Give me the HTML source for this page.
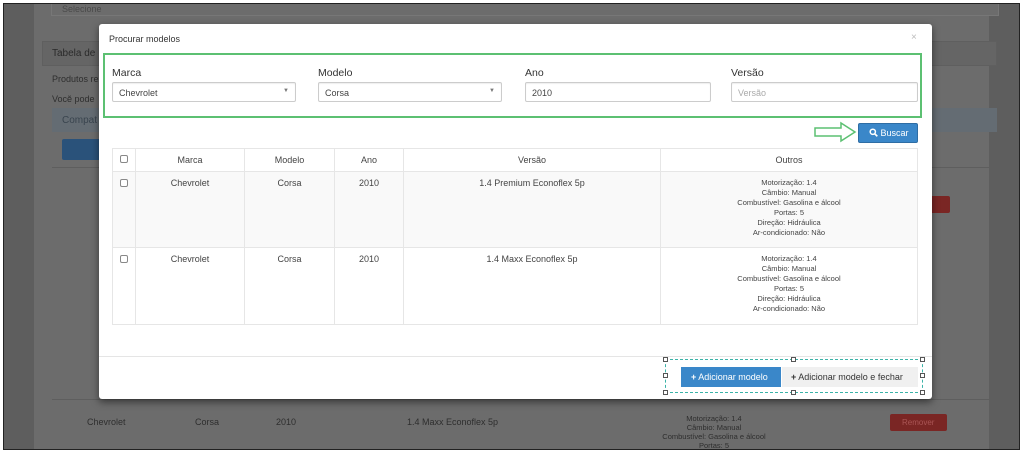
<!DOCTYPE html>
<html><head><meta charset="utf-8"><style>
*{box-sizing:border-box;margin:0;padding:0}
body{width:1024px;height:454px;overflow:hidden;background:#fff;font-family:"Liberation Sans",sans-serif;position:relative}
.a{position:absolute}
.frame{left:3px;top:3px;width:1017px;height:447px;background:#5e5e5e;border:1.5px solid #222;overflow:hidden}
.t{color:#2e2e2e;font-size:9px}
.lbl{font-size:10.5px;color:#333}
.inp{background:#fff;border:1px solid #ccc;border-radius:2px;height:20px;font-size:9px;color:#444;padding:5px 6px;box-shadow:inset 0 1px 1px rgba(0,0,0,.07)}
table{border-collapse:collapse;font-size:9px;color:#444}
td,th{border:1px solid #e6e6e6;text-align:center;vertical-align:top;font-weight:normal}
th{height:23px;vertical-align:middle}
.cb{display:inline-block;width:8px;height:8px;border:1px solid #888;border-radius:2px;background:#fff}
.o{font-size:7.5px;line-height:10px;padding-top:6px}
.h{position:absolute;width:5px;height:5px;border:1px solid #555;background:#fff}
</style></head><body>
<div class="a frame">
 <div class="a" style="left:30px;top:0;width:955px;height:450px;background:#6c6c6c"></div>
 <div class="a" style="left:47px;top:-6px;width:948px;height:18px;border:1px solid #777;background:#6c6c6c"></div>
 <div class="a t" style="left:58px;top:0;font-size:9px;color:#4a4a4a">Selecione</div>
 <div class="a" style="left:38px;top:37px;width:955px;height:25px;background:#656565;border:1px solid #5f5f5f"></div>
 <div class="a t" style="left:48px;top:44px;font-size:10px;color:#2a2a2a">Tabela de</div>
 <div class="a t" style="left:48px;top:70px">Produtos rel</div>
 <div class="a t" style="left:48px;top:90px">Vocĕ pode</div>
 <div class="a" style="left:48px;top:104px;width:945px;height:24px;background:#646c73"></div>
 <div class="a t" style="left:58px;top:111px;font-size:10px;color:#39444e">Compat</div>
 <div class="a" style="left:58px;top:135px;width:45px;height:21px;background:#2a527a;border-radius:2px"></div>
 <div class="a" style="left:48px;top:163px;width:945px;height:1px;background:#5e5e5e"></div>
 <div class="a" style="left:886px;top:192px;width:60px;height:17px;background:#7a2624;border-radius:2px"></div>
 <div class="a" style="left:48px;top:395px;width:945px;height:1px;background:#5e5e5e"></div>
 <div class="a t" style="left:83px;top:413px">Chevrolet</div>
 <div class="a t" style="left:191px;top:413px">Corsa</div>
 <div class="a t" style="left:272px;top:413px">2010</div>
 <div class="a t" style="left:403px;top:413px">1.4 Maxx Econoflex 5p</div>
 <div class="a t" style="left:655px;top:410px;font-size:7.5px;line-height:9px;text-align:center;width:110px">Motorização: 1.4<br>Câmbio: Manual<br>Combustível: Gasolina e álcool<br>Portas: 5</div>
 <div class="a" style="left:886px;top:410px;width:57px;height:17px;background:#7a2624;border-radius:2px;font-size:8px;color:#a55;padding:4px 0 0 12px;white-space:nowrap">Remover</div>
</div>
<!-- modal -->
<div class="a" style="left:99px;top:24px;width:833px;height:375px;background:#fff;border-radius:3px;box-shadow:0 3px 8px rgba(0,0,0,.5)">
 <div class="a" style="left:10px;top:10px;font-size:9px;color:#333">Procurar modelos</div>
 <div class="a" style="left:812px;top:8px;font-size:10px;color:#bbb">×</div>
 <div class="a" style="left:4px;top:29px;width:819px;height:65px;border:2px solid #5cc072"></div>
 <div class="a lbl" style="left:13px;top:43px">Marca</div>
 <div class="a lbl" style="left:219px;top:43px">Modelo</div>
 <div class="a lbl" style="left:426px;top:43px">Ano</div>
 <div class="a lbl" style="left:632px;top:43px">Versão</div>
 <div class="a inp" style="left:13px;top:58px;width:184px">Chevrolet<span style="float:right;font-size:6px;color:#777">▼</span></div>
 <div class="a inp" style="left:219px;top:58px;width:184px">Corsa<span style="float:right;font-size:6px;color:#777">▼</span></div>
 <div class="a inp" style="left:426px;top:58px;width:186px">2010</div>
 <div class="a inp" style="left:632px;top:58px;width:187px;color:#aaa">Versão</div>
 <svg class="a" style="left:714px;top:97px" width="46" height="22"><path d="M2 7H28V2L42 11L28 20V15H2Z" fill="#fff" stroke="#5cc072" stroke-width="1.5"/></svg>
 <div class="a" style="left:759px;top:99px;width:60px;height:20px;background:#3a87c9;border:1px solid #2e6da4;border-radius:2px;color:#fff;font-size:9px;padding:4px 0 0 10px"><svg width="9" height="9" style="vertical-align:-1px"><circle cx="3.8" cy="3.8" r="2.6" fill="none" stroke="#fff" stroke-width="1.5"/><path d="M5.8 5.8L8.3 8.3" stroke="#fff" stroke-width="1.7"/></svg> Buscar</div>
 <table class="a" style="left:13px;top:124px;width:806px">
  <tr><th style="width:23px"><span class="cb"></span></th><th style="width:109px">Marca</th><th style="width:90px">Modelo</th><th style="width:69px">Ano</th><th style="width:257px">Versão</th><th>Outros</th></tr>
  <tr style="background:#f9f9f9;height:76px"><td style="padding-top:7px"><span class="cb"></span></td><td style="padding-top:6px">Chevrolet</td><td style="padding-top:6px">Corsa</td><td style="padding-top:6px">2010</td><td style="padding-top:6px">1.4 Premium Econoflex 5p</td><td class="o">Motorização: 1.4<br>Câmbio: Manual<br>Combustível: Gasolina e álcool<br>Portas: 5<br>Direção: Hidráulica<br>Ar-condicionado: Não</td></tr>
  <tr style="height:77px"><td style="padding-top:7px"><span class="cb"></span></td><td style="padding-top:6px">Chevrolet</td><td style="padding-top:6px">Corsa</td><td style="padding-top:6px">2010</td><td style="padding-top:6px">1.4 Maxx Econoflex 5p</td><td class="o">Motorização: 1.4<br>Câmbio: Manual<br>Combustível: Gasolina e álcool<br>Portas: 5<br>Direção: Hidráulica<br>Ar-condicionado: Não</td></tr>
 </table>
 <div class="a" style="left:0;top:332px;width:833px;height:1px;background:#e5e5e5"></div>
 <div class="a" style="left:566px;top:335px;width:258px;height:34px;border:1.5px dashed #3bb3a8"></div>
 <div class="h" style="left:564px;top:333px"></div><div class="h" style="left:692px;top:333px"></div><div class="h" style="left:821px;top:333px"></div>
 <div class="h" style="left:564px;top:349px"></div><div class="h" style="left:821px;top:349px"></div>
 <div class="h" style="left:564px;top:366px"></div><div class="h" style="left:692px;top:366px"></div><div class="h" style="left:821px;top:366px"></div>
 <div class="a" style="left:582px;top:343px;width:100px;height:20px;background:#3a87c9;color:#fff;font-size:9px;padding:5px 0 0 10px"><b>+</b> Adicionar modelo</div>
 <div class="a" style="left:683px;top:343px;width:136px;height:20px;background:#f0f0f0;color:#333;font-size:9px;padding:5px 0 0 9px"><b>+</b> Adicionar modelo e fechar</div>
</div>
</body></html>
